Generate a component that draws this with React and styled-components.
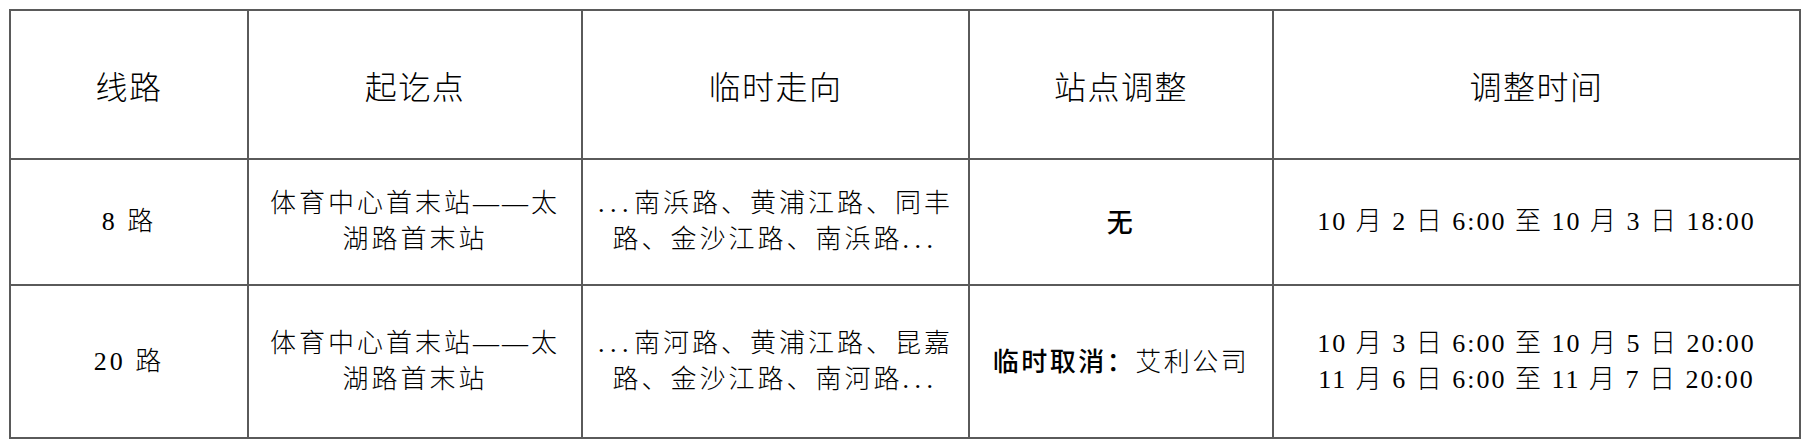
import React from "react";
import styled, { createGlobalStyle } from "styled-components";

const Global = createGlobalStyle`
  html, body { margin: 0; padding: 0; background: #fff; }
  body { font-family: "Liberation Serif", "Noto Sans CJK SC", serif; color: #000; }
`;

const Page = styled.div`
  padding: 9px 0 0 9px;
`;

const Table = styled.table`
  border-collapse: collapse;
  table-layout: fixed;
  width: 1790px;
`;

const Col = styled.col``;

const HeadCell = styled.th`
  border: 2px solid #5a5a5a;
  height: 147px;
  padding: 0;
  font-weight: 300;
  font-size: 32px;
  letter-spacing: 1.5px;
  text-align: center;
  vertical-align: middle;
`;

const Cell = styled.td`
  border: 2px solid #5a5a5a;
  height: ${(p) => p.$h}px;
  padding: 0 6px;
  font-weight: 300;
  font-size: 26px;
  line-height: 36px;
  letter-spacing: ${(p) => p.$ls ?? 3}px;
  text-align: center;
  vertical-align: middle;
`;

const Strong = styled.span`
  font-family: "Noto Sans CJK SC", sans-serif;
  font-weight: 500;
  letter-spacing: 2.5px;
`;

const Dots = styled.span`
  letter-spacing: 5.5px;
`;

const widths = [238, 334, 387, 304, 527];

const rows = [
  {
    h: 124,
    line: "8 路",
    ends: ["体育中心首末站——太", "湖路首末站"],
    route: [
      <><Dots>...</Dots>南浜路、黄浦江路、同丰</>,
      <>路、金沙江路、南浜路<Dots>...</Dots></>,
    ],
    stop: <Strong>无</Strong>,
    time: ["10 月 2 日 6:00 至 10 月 3 日 18:00"],
  },
  {
    h: 151,
    line: "20 路",
    ends: ["体育中心首末站——太", "湖路首末站"],
    route: [
      <><Dots>...</Dots>南河路、黄浦江路、昆嘉</>,
      <>路、金沙江路、南河路<Dots>...</Dots></>,
    ],
    stop: (
      <>
        <Strong>临时取消：</Strong>艾利公司
      </>
    ),
    time: [
      "10 月 3 日 6:00 至 10 月 5 日 20:00",
      "11 月 6 日 6:00 至 11 月 7 日 20:00",
    ],
  },
];

const Lines = ({ items }) =>
  items.map((t, i) => (
    <React.Fragment key={i}>
      {i > 0 && <br />}
      {t}
    </React.Fragment>
  ));

export default function App() {
  return (
    <>
      <Global />
      <Page>
        <Table>
          <colgroup>
            {widths.map((w, i) => (
              <Col key={i} style={{ width: w }} />
            ))}
          </colgroup>
          <thead>
            <tr>
              <HeadCell>线路</HeadCell>
              <HeadCell>起讫点</HeadCell>
              <HeadCell>临时走向</HeadCell>
              <HeadCell>站点调整</HeadCell>
              <HeadCell>调整时间</HeadCell>
            </tr>
          </thead>
          <tbody>
            {rows.map((r, i) => (
              <tr key={i}>
                <Cell $h={r.h}>{r.line}</Cell>
                <Cell $h={r.h}>
                  <Lines items={r.ends} />
                </Cell>
                <Cell $h={r.h}>
                  <Lines items={r.route} />
                </Cell>
                <Cell $h={r.h} $ls={2.5}>{r.stop}</Cell>
                <Cell $h={r.h} $ls={2}>
                  <Lines items={r.time} />
                </Cell>
              </tr>
            ))}
          </tbody>
        </Table>
      </Page>
    </>
  );
}
